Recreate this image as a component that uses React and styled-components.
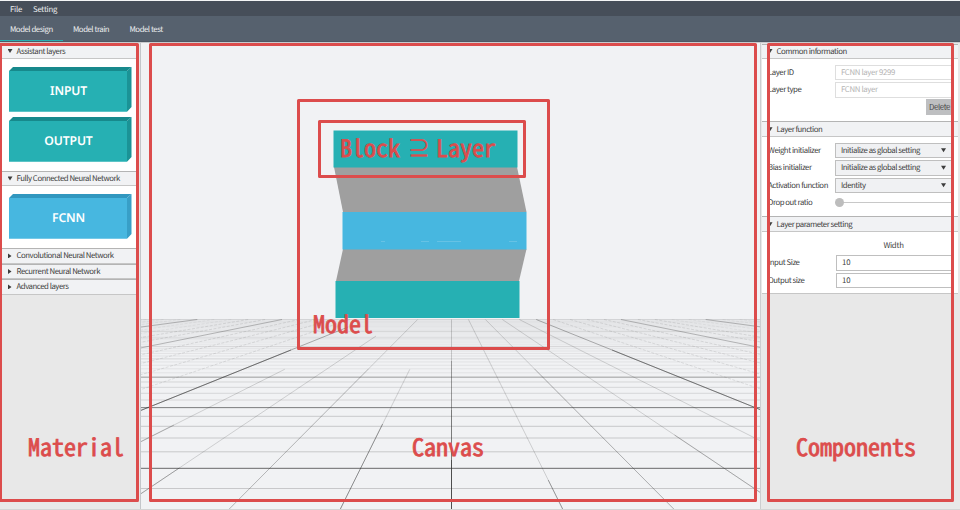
import React from "react";
import styled, { createGlobalStyle, css } from "styled-components";

const RED = "#dc4c4c";
const UI = '"Noto Sans CJK JP", "Noto Sans", sans-serif';

const GlobalStyle = createGlobalStyle`
  * { box-sizing: border-box; }
  body { margin: 0; background: #fff; overflow: hidden; }
`;

const Window = styled.div`
  position: relative;
  display: flex;
  flex-direction: column;
  width: 960px;
  height: 510px;
  overflow: hidden;
  border-top: 1px solid #f4f5f6;
  font-family: ${UI};
  font-size: 7.8px;
  letter-spacing: -0.46px;
  text-rendering: geometricPrecision;
  line-height: 12px;
  color: #404040;
  white-space: nowrap;
`;

const MenuBar = styled.nav`
  display: flex;
  align-items: center;
  gap: 11px;
  height: 15px;
  padding: 2px 10px 0;
  background: #464e59;
  color: #eef0f1;
  letter-spacing: -0.25px;
`;

const TabBar = styled.nav`
  display: flex;
  height: 26px;
  background: #56616e;
  border-bottom: 1px solid #4f5864;
  color: #eef0f1;
`;

const Tab = styled.div`
  width: ${(p) => p.$w}px;
  padding: 7.5px 0 0 10px;
  height: 25px;
  ${(p) => p.$active && css`border-bottom: 1px solid #26b0b2;`}
`;

const Main = styled.main`
  display: flex;
  flex: 1;
  border-top: 1px solid #c9cbce;
  border-bottom: 1px solid #d4d4d4;
`;

const Sidebar = styled.aside`
  width: 141px;
  padding: 1px 4px 0 2px;
  background: #e8e8e8;
  border-right: 1px solid #c3c6ca;
`;

const Inspector = styled.aside`
  width: 200px;
  padding: 1px 2px 0 1px;
  background: #e8e8e8;
  border-left: 1px solid #cccdcf;
`;

const Stage = styled.section`
  width: 619px;
  background: #f1f2f4;
  svg { display: block; }
`;

const SectionHead = styled.header`
  display: flex;
  align-items: center;
  gap: 4px;
  height: ${(p) => p.$h || 15.5}px;
  padding: ${(p) => (p.$h === 15 ? 0 : 1.4)}px 0 0 5.5px;
  background: #f1f2f4;
  border-top: 1px solid #b4b4b4;
  border-bottom: 1px solid #c6c6c6;
`;

const Arrow = styled.i`
  width: 5px;
  height: 5px;
  margin-top: -1px;
  background: #3c3c3c;
  clip-path: ${(p) => (p.$open ? "polygon(0 10%, 100% 10%, 50% 90%)" : "polygon(10% 0, 80% 50%, 10% 100%)")};
`;

const Blocks = styled.div`
  display: flex;
  flex-direction: column;
  gap: 5px;
  height: ${(p) => p.$h}px;
  padding: 8px 0 0 7px;
  background: #fff;
`;

const Cube = styled.div`
  position: relative;
  width: 123px;
  height: 45px;
  svg { display: block; }
`;

const CubeLabel = styled.span`
  position: absolute;
  left: 0;
  top: 14.5px;
  width: 119px;
  text-align: center;
  font: 600 12.2px/18px "Noto Sans", sans-serif;
  letter-spacing: -0.15px;
  color: #fff;
`;

const Form = styled.div`
  display: flex;
  flex-direction: column;
  gap: 2.5px;
  height: ${(p) => p.$h}px;
  padding: ${(p) => p.$top}px 6px 0 6px;
  background: #fff;
  ${(p) => p.$last && css`border-bottom: 1px solid #c6c6c6;`}
`;

const Row = styled.label`
  display: grid;
  grid-template-columns: ${(p) => p.$label || 67}px 117px;
  align-items: center;
  height: 15px;
`;

const Caption = styled.span`
  padding-top: 1.2px;
`;

const Field = styled.div`
  display: flex;
  align-items: center;
  justify-content: space-between;
  height: 15.5px;
  padding: 1px 5px 0;
  background: ${(p) => (p.$select ? "#f0f1f3" : "#fff")};
  border: 1px solid ${(p) => (p.$muted ? "#dedede" : "#bfbfbf")};
  color: ${(p) => (p.$muted ? "#b4b4b4" : "#404040")};
  letter-spacing: ${(p) => (p.$select ? -0.46 : p.$muted ? -0.36 : 0)}px;
`;

const Delete = styled.button`
  align-self: flex-end;
  width: 27px;
  height: 16px;
  margin: -1px -1px 0 0;
  padding: 0;
  border: 0;
  background: #bebfc1;
  color: #4a4a4a;
  font: inherit;
  letter-spacing: -0.35px;
`;

const Track = styled.div`
  display: flex;
  align-items: center;
  height: 1px;
  background: #c8c8c8;
`;

const Thumb = styled.i`
  width: 9px;
  height: 9px;
  border-radius: 50%;
  background: #bdbdbd;
`;

const ColumnTitle = styled.div`
  padding-left: 67px;
  text-align: center;
  height: 15px;
  line-height: 16px;
  letter-spacing: -0.25px;
`;

const Frame = styled.div`
  position: absolute;
  left: ${(p) => p.$x}px;
  top: ${(p) => p.$y}px;
  width: ${(p) => p.$w}px;
  height: ${(p) => p.$h}px;
  border: 3px solid ${RED};
  border-radius: 1.5px;
`;

const Note = styled.div`
  position: absolute;
  left: ${(p) => p.$x}px;
  top: ${(p) => p.$y}px;
  display: flex;
  align-items: center;
  font: 400 24px/30px "Noto Sans Mono CJK JP", "DejaVu Sans Mono", monospace;
  letter-spacing: 0;
  -webkit-text-stroke: 0.8px ${RED};
  color: ${RED};
`;

const Symbol = styled.span`
  width: 36px;
  padding-left: 8px;
  font-size: 22px;
  -webkit-text-stroke-width: 0.3px;
`;

function CubeButton({ label, face, top, side }) {
  return (
    <Cube>
      <svg width="123" height="45">
        <path d="M0 4L4 0H122.5L118 4Z" fill={top} />
        <path d="M118 4L122.5 0V40L118 44.7Z" fill={side} />
        <path d="M0 4H118V44.7H0Z" fill={face} />
      </svg>
      <CubeLabel>{label}</CubeLabel>
    </Cube>
  );
}

const TEAL = { face: "#26b0b3", top: "#17898c", side: "#1b9396" };
const BLUE = { face: "#47b7e0", top: "#3197bf", side: "#389fc7" };

const VANISH_X = 310.5;
const VANISH_Y = 285.4;
const rayX = (n, y) => VANISH_X + n * (y - VANISH_Y) * 0.497;
const rayStart = { "-1": 369.3, "-3": 336, "-4": 369.3, "-5": 327 };

const rays = [];
for (let n = -20; n <= 20; n++) {
  const a = Math.abs(n);
  const major = n % 5 === 0;
  const y = rayStart[n] || 319.5;
  rays.push({
    n,
    y,
    dash: a > 5 && !major ? "3 1.5" : undefined,
    opacity: n === 0 ? 0.22 : a === 5 ? 0.36 : major ? 0.3 : a > 12 ? 0.06 : a > 5 ? 0.12 : 0.19,
  });
}

const rows = [];
for (let k = -1; k <= 44; k++) {
  const major = k % 5 === 0;
  rows.push({
    y: VANISH_Y + 1 / (0.005467 + k * 0.000543),
    opacity: major ? (k === 0 ? 0.7 : k === 5 ? 0.6 : k === 10 ? 0.45 : k < 35 ? 0.14 : 0.06) : k < 5 ? 0.21 : k < 10 ? 0.14 : k < 20 ? 0.08 : 0.035,
  });
}

const accents = [
  [0, 361, 410, 0.3], [0, 410, 460, 0.5], [0, 460, 510, 0.8],
  [-1, 424, 510, 0.4], [1, 480, 510, 0.35], [2, 369, 510, 0.2],
  [-2, 369, 510, 0.15], [3, 435, 510, 0.25], [-3, 468, 510, 0.3],
  [-4, 425, 510, 0.25], [5, 350, 410, 0.45], [-5, 350, 411, 0.5],
];

function Scene() {
  return (
    <svg width="619" height="466" viewBox="0 43 619 466">
      <rect x="0" y="319.5" width="619" height="28" fill="#000" opacity=".012" />
      <path d="M0 319.5H619" stroke="#000" opacity=".08" />
      <g stroke="#303030" fill="none">
        {rows.map((r) => (
          <path key={r.y} d={`M0 ${r.y}H619`} opacity={r.opacity} />
        ))}
        {rays.map((r) => (
          <path key={r.n} d={`M${rayX(r.n, r.y)} ${r.y}L${rayX(r.n, 510)} 510`} opacity={r.opacity} strokeDasharray={r.dash} />
        ))}
        {accents.map(([n, a, b, o]) => (
          <path key={`${n}/${a}`} d={`M${rayX(n, a)} ${a}L${rayX(n, b)} ${b}`} opacity={o} />
        ))}
      </g>
      <path d="M193 167H376L385.5 212H202Z" fill="#9f9f9f" />
      <path d="M202 249H385.5L378 281H195Z" fill="#9f9f9f" />
      <rect x="192.5" y="130.5" width="184" height="37" fill="#26b0b3" />
      <rect x="201.5" y="212" width="184" height="37.5" fill="#47b7e0" />
      <rect x="194.5" y="281" width="184" height="37" fill="#26b0b3" />
      <path d="M240 241.5h4M280 241.5h8M296 241.5h24M368 241.5h8" stroke="#6ec5e5" strokeWidth=".8" />
    </svg>
  );
}

function Head({ children, open, ...rest }) {
  return (
    <SectionHead {...rest}>
      <Arrow $open={open} />
      {children}
    </SectionHead>
  );
}

function Select({ label, value }) {
  return (
    <Row>
      <Caption>{label}</Caption>
      <Field $select>
        {value}
        <Arrow $open />
      </Field>
    </Row>
  );
}

export default function App() {
  return (
    <>
      <GlobalStyle />
      <Window>
        <MenuBar><span>File</span><span>Setting</span></MenuBar>
        <TabBar>
          <Tab $w={63} $active>Model design</Tab>
          <Tab $w={56.5}>Model train</Tab>
          <Tab $w={60}>Model test</Tab>
        </TabBar>
        <Main>
          <Sidebar>
            <Head open $h={15}>Assistant layers</Head>
            <Blocks $h={111.5}>
              <CubeButton label="INPUT" {...TEAL} />
              <CubeButton label="OUTPUT" {...TEAL} />
            </Blocks>
            <Head open>Fully Connected Neural Network</Head>
            <Blocks $h={62}>
              <CubeButton label="FCNN" {...BLUE} />
            </Blocks>
            <Head>Convolutional Neural Network</Head>
            <Head>Recurrent Neural Network</Head>
            <Head>Advanced layers</Head>
          </Sidebar>
          <Stage><Scene /></Stage>
          <Inspector>
            <Head open $h={15}>Common information</Head>
            <Form $h={62} $top={5.5}>
              <Row><Caption>Layer ID</Caption><Field $muted>FCNN layer 9299</Field></Row>
              <Row><Caption>Layer type</Caption><Field $muted>FCNN layer</Field></Row>
              <Delete>Delete</Delete>
            </Form>
            <Head open $h={16}>Layer function</Head>
            <Form $h={79} $top={5.5}>
              <Select label="Weight initializer" value="Initialize as global setting" />
              <Select label="Bias initializer" value="Initialize as global setting" />
              <Select label="Activation function" value="Identity" />
              <Row><Caption>Drop out ratio</Caption><Track><Thumb /></Track></Row>
            </Form>
            <Head open $h={16}>Layer parameter setting</Head>
            <Form $h={62} $top={5.5} $last>
              <ColumnTitle>Width</ColumnTitle>
              <Row $label={68}><Caption>Input Size</Caption><Field>10</Field></Row>
              <Row $label={68}><Caption>Output size</Caption><Field>10</Field></Row>
            </Form>
          </Inspector>
        </Main>
        <Frame $x={-1} $y={42} $w={140} $h={458.5} />
        <Frame $x={149} $y={42} $w={608} $h={458.5} />
        <Frame $x={767} $y={42} $w={187} $h={458.5} />
        <Frame $x={297} $y={97.5} $w={253} $h={251.5} />
        <Frame $x={318} $y={119} $w={208} $h={58} />
        <Note $x={340} $y={131}>Block<Symbol>⊇</Symbol>Layer</Note>
        <Note $x={313} $y={307}>Model</Note>
        <Note $x={28} $y={430}>Material</Note>
        <Note $x={412} $y={430}>Canvas</Note>
        <Note $x={796} $y={430}>Components</Note>
      </Window>
    </>
  );
}
